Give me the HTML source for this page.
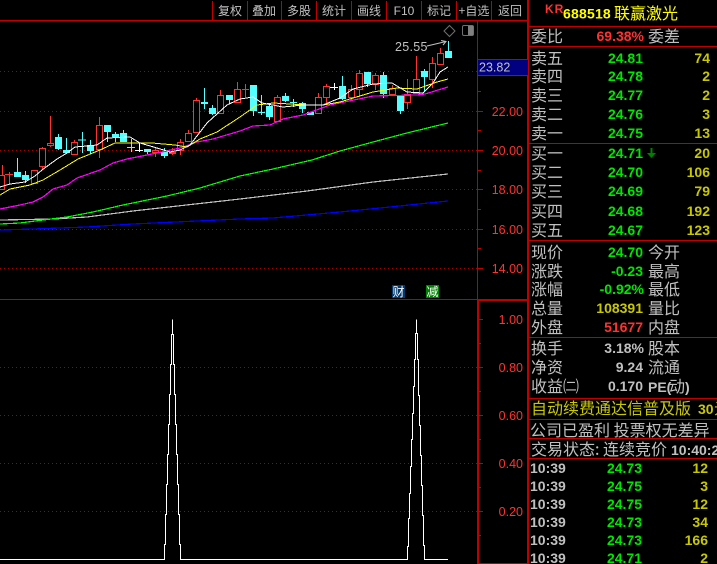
<!DOCTYPE html>
<html><head><meta charset="utf-8"><style>
html,body{margin:0;padding:0;background:#000;width:717px;height:564px;overflow:hidden}
svg{display:block}
text{white-space:pre}
.c{font:16px "WenQuanYi Zen Hei","Noto Sans CJK SC",sans-serif;fill:#c0c0c0}
.b{font:bold 14px "Liberation Sans",sans-serif;text-anchor:end}
.g{fill:#00e600}.y{fill:#c8c800}.r{fill:#ff3232}.w{fill:#c0c0c0}
.tb{font:12px "WenQuanYi Zen Hei","Noto Sans CJK SC",sans-serif;fill:#c0c0c0;text-anchor:middle}
.ax{font:12.5px "Liberation Sans",sans-serif;fill:#ff3232;text-anchor:end}
.ma{fill:none;stroke-width:1.2;shape-rendering:crispEdges}
.mt{fill:none;stroke-width:1;shape-rendering:crispEdges}
.s{shape-rendering:crispEdges}
</style></head><body>
<svg width="717" height="564" viewBox="0 0 717 564" xmlns="http://www.w3.org/2000/svg">
<rect width="717" height="564" fill="#000"/>
<!-- grid -->
<g stroke="#a80000" stroke-dasharray="1 3" class="s" fill="none">
<path d="M0 71.5H477M0 111.5H477M0 150.5H477M0 189.5H477M0 229.5H477M0 268.5H477M0 367.5H477M0 415.5H477M0 463.5H477M0 511.5H477"/>
</g>
<!-- candles: wicks -->
<g class="s" fill="none" stroke-width="1">
<path stroke="#ff3232" d="M2.5 165V190M9.5 172V185M5 174.5H13M34.5 170V183M42.5 147V170M50.5 116V147M74.5 140V155M99.5 117V158M155.5 148V157M172.5 148V155M180.5 139V155M188.5 130V142M196.5 98V133M220.5 90V114M237.5 82V103M245.5 84V97M242 89.5H249M277.5 95V122M318.5 93V114M326.5 84V103M351.5 85V100M359.5 70V97M375.5 73V90M392.5 85V96M407.5 79V109M416.5 56V93M432.5 57V88M440.5 48V64"/>
<path stroke="#54ffff" d="M17.5 158V177M25.5 171V183M58.5 134V150M66.5 138V154M82.5 132V153M78 140H86M90.5 140V154M107.5 125V142M115.5 132V142M123.5 130V142M131.5 139V152M127 147.5H135M147.5 149V154M164.5 148V158M204.5 88V109M212.5 105V115M229.5 95V104M253.5 85V116M261.5 95V115M269.5 104V120M285.5 93V102M293.5 99V107M302.5 102V113M310.5 112V115M342.5 76V100M367.5 72V87M383.5 72V98M400.5 96V114M424.5 69V92M448.5 41V58"/>
<path stroke="#ffffff" d="M139.5 143V152M135 150.5H143M334.5 83V90M330 87.5H338"/>
</g>
<g class="s" fill="#000" stroke="#ff3232">
<rect x="-1.5" y="175.5" width="6" height="14"/>
<rect x="31.5" y="170.5" width="6" height="13"/>
<rect x="39.5" y="148.5" width="6" height="18"/>
<rect x="47.5" y="143.5" width="6" height="2"/>
<rect x="71.5" y="142.5" width="6" height="12"/>
<rect x="96.5" y="125.5" width="6" height="24"/>
<rect x="152.5" y="150.5" width="6" height="2"/>
<rect x="169.5" y="152.5" width="6" height="1"/>
<rect x="177.5" y="142.5" width="6" height="8"/>
<rect x="185.5" y="133.5" width="6" height="8"/>
<rect x="193.5" y="100.5" width="6" height="32"/>
<rect x="217.5" y="95.5" width="6" height="18"/>
<rect x="234.5" y="89.5" width="6" height="13"/>
<rect x="274.5" y="97.5" width="6" height="24"/>
<rect x="315.5" y="97.5" width="6" height="16"/>
<rect x="323.5" y="86.5" width="6" height="11"/>
<rect x="348.5" y="89.5" width="6" height="8"/>
<rect x="356.5" y="73.5" width="6" height="16"/>
<rect x="372.5" y="75.5" width="6" height="9"/>
<rect x="389.5" y="88.5" width="6" height="6"/>
<rect x="404.5" y="94.5" width="6" height="8"/>
<rect x="413.5" y="79.5" width="6" height="14"/>
<rect x="429.5" y="63.5" width="6" height="16"/>
<rect x="437.5" y="53.5" width="6" height="11"/>
</g>
<g class="s" fill="#54ffff">
<rect x="14" y="172" width="7" height="5"/>
<rect x="22" y="175" width="7" height="5"/>
<rect x="55" y="137" width="7" height="12"/>
<rect x="63" y="150" width="7" height="3"/>
<rect x="104" y="125" width="7" height="7"/>
<rect x="112" y="134" width="7" height="3"/>
<rect x="120" y="133" width="7" height="9"/>
<rect x="144" y="149" width="7" height="3"/>
<rect x="161" y="152" width="7" height="4"/>
<rect x="201" y="102" width="7" height="2"/>
<rect x="209" y="108" width="7" height="6"/>
<rect x="226" y="95" width="7" height="5"/>
<rect x="250" y="85" width="7" height="26"/>
<rect x="258" y="112" width="7" height="1"/>
<rect x="266" y="106" width="7" height="11"/>
<rect x="282" y="96" width="7" height="5"/>
<rect x="290" y="102" width="7" height="1"/>
<rect x="299" y="103" width="7" height="6"/>
<rect x="307" y="112" width="7" height="3"/>
<rect x="339" y="86" width="7" height="13"/>
<rect x="364" y="72" width="7" height="12"/>
<rect x="380" y="75" width="7" height="19"/>
<rect x="397" y="96" width="7" height="15"/>
<rect x="421" y="71" width="7" height="6"/>
<rect x="445" y="51" width="7" height="7"/>
<rect x="87" y="145" width="7" height="6"/>
</g>
<!-- moving averages -->
<polyline class="ma" stroke="#0000ff" points="0,230 33,229 87,227 133,224 240,219 273,218 340,212 390,207 448,201"/>
<polyline class="ma" stroke="#c0c0c0" points="0,220 53,219 87,217 133,211 240,199 307,191 373,182 448,174"/>
<polyline class="ma" stroke="#00ff00" points="0,224 20,223 43,220 67,217 93,212 123,205 167,196 200,188 240,176 273,169 312,160 340,151 373,142 407,133 448,123"/>
<polyline class="ma" stroke="#ff00ff" points="0,209 20,205 33,202 43,197 53,189 67,185 77,178 100,170 113,163 127,159 157,153 180,148 197,142 213,139 240,131 253,126 270,125 283,119 303,115 330,105 373,96 417,95 425,94 448,87"/>
<polyline class="mt" stroke="#ffff00" points="0,195 10,189 30,185 43,180 60,170 78,159 100,150 115,143 152,143 175,145 187,147 200,139 217,132 240,117 257,105 273,103 307,105 323,105 340,102 373,92 397,88 417,89 437,82 448,79"/>
<polyline class="mt" stroke="#ffffff" points="0,187 10,184 25,182 35,176 42,170 57,159 67,153 75,147 87,146 97,145 107,138 130,137 140,143 157,148 170,152 180,150 190,145 207,123 227,105 240,99 253,97 262,103 283,107 303,105 323,105 340,98 353,89 373,84 392,83 407,92 423,93 433,83 440,72 448,67"/>
<!-- price marker and icons -->
<text x="395" y="51" style="font:12.5px 'Liberation Sans',sans-serif;letter-spacing:.3px" fill="#c0c0c0">25.55</text>
<path d="M427 46L446 41.5M441 40.5L446 41.5L443 45" fill="none" stroke="#c0c0c0" stroke-width="1"/>
<path d="M449.5 25.5L455 31L449.5 36.5L444 31Z" fill="none" stroke="#707070"/>
<rect x="462.5" y="25.5" width="11" height="10" rx="1.5" fill="#000" stroke="#707070"/>
<rect x="468" y="26" width="5" height="9" fill="#808080"/>
<!-- labels 财 减 -->
<rect x="392" y="285" width="13" height="13" fill="#003a6e"/>
<rect x="426" y="285" width="13" height="13" fill="#008000"/>
<text x="392.5" y="296" style="font:12px 'WenQuanYi Zen Hei','Noto Sans CJK SC',sans-serif" fill="#fff">财</text>
<text x="426.5" y="296" style="font:12px 'WenQuanYi Zen Hei','Noto Sans CJK SC',sans-serif" fill="#fff">减</text>
<!-- lower pane -->
<path class="s" fill="none" stroke="#fff" stroke-width="1" d="M0 559.5H164.5V544.5H165.5V514.5H166.5V484.5H167.5V454.5H168.5V424.5H169.5V394.5H170.5V364.5H171.5V334.5H172.5V319.5V334.5H173.5V364.5H174.5V394.5H175.5V424.5H176.5V454.5H177.5V484.5H178.5V514.5H179.5V544.5H180.5V559.5H407.5V546.5H408.5V518.5H409.5V493.5H410.5V466.5H411.5V439.5H412.5V413.5H413.5V386.5H414.5V359.5H415.5V333.5H416.5V319.5V333.5H417.5V359.5H418.5V395.5H419.5V425.5H420.5V455.5H421.5V485.5H422.5V515.5H423.5V545.5H424.5V559.5H448"/>
<!-- frame lines -->
<g class="s" fill="#c00000">
<rect x="0" y="20" width="528" height="1.5"/>
<rect x="0" y="299" width="477" height="1"/>
<rect x="477" y="21" width="1" height="278"/>
<rect x="477" y="299" width="52" height="2"/>
<rect x="477" y="301" width="2" height="263"/>
<rect x="527" y="0" width="2" height="564"/>
<rect x="477" y="563" width="52" height="1"/>
<rect x="478" y="59" width="50" height="1"/>
<rect x="478" y="75" width="50" height="1"/>
<rect x="529" y="26" width="188" height="1"/>
<rect x="529" y="46" width="188" height="1"/>
<rect x="529" y="143" width="188" height="1"/>
<rect x="529" y="240" width="188" height="1"/>
<rect x="529" y="337" width="188" height="1"/>
<rect x="529" y="398" width="188" height="1"/>
<rect x="529" y="419" width="188" height="1"/>
<rect x="529" y="438" width="188" height="1"/>
<rect x="529" y="458" width="188" height="1"/>
<rect x="212" y="1" width="1" height="19"/>
<rect x="247" y="1" width="1" height="19"/>
<rect x="281" y="1" width="1" height="19"/>
<rect x="316" y="1" width="1" height="19"/>
<rect x="351" y="1" width="1" height="19"/>
<rect x="386" y="1" width="1" height="19"/>
<rect x="421" y="1" width="1" height="19"/>
<rect x="456" y="1" width="1" height="19"/>
<rect x="491" y="1" width="1" height="19"/>
</g>
<!-- axis ticks -->
<path class="s" stroke="#c00000" fill="none" d="M478 91.5H481M478 111.5H483M478 130.5H481M478 150.5H483M478 170.5H481M478 189.5H483M478 209.5H481M478 229.5H483M478 248.5H481M478 268.5H483M479 319.5H483M479 343.5H481M479 367.5H483M479 391.5H481M479 415.5H483M479 439.5H481M479 463.5H483M479 487.5H481M479 511.5H483M479 535.5H481"/>
<!-- toolbar -->
<text class="tb" x="230" y="15">复权</text>
<text class="tb" x="264" y="15">叠加</text>
<text class="tb" x="299" y="15">多股</text>
<text class="tb" x="334" y="15">统计</text>
<text class="tb" x="369" y="15">画线</text>
<text class="tb" x="404" y="15" style="font-family:'Liberation Sans',sans-serif">F10</text>
<text class="tb" x="439" y="15">标记</text>
<text class="tb" x="474" y="15">+自选</text>
<text class="tb" x="510" y="15">返回</text>
<!-- axis -->
<rect x="478" y="60" width="50" height="15" fill="#000080"/>
<text x="479" y="71.5" style="font:12.5px 'Liberation Sans',sans-serif" fill="#c0c0c0">23.82</text>
<text class="ax" x="523" y="116">22.00</text>
<text class="ax" x="523" y="155">20.00</text>
<text class="ax" x="523" y="194">18.00</text>
<text class="ax" x="523" y="234">16.00</text>
<text class="ax" x="523" y="273">14.00</text>
<text class="ax" x="523" y="324">1.00</text>
<text class="ax" x="523" y="372">0.80</text>
<text class="ax" x="523" y="420">0.60</text>
<text class="ax" x="523" y="468">0.40</text>
<text class="ax" x="523" y="516">0.20</text>
<!-- quote header -->
<text x="545" y="13" style="font:bold 12px 'Liberation Sans',sans-serif;letter-spacing:1px" fill="#ff3232">KR</text>
<text x="563" y="18.5" style="font:bold 14px 'Liberation Sans',sans-serif;letter-spacing:.2px" fill="#ffff00">688518</text>
<text x="614" y="19" class="c" style="fill:#ffff00">联赢激光</text>
<text x="531" y="42" class="c">委比</text>
<text x="644" y="41" class="b r">69.38%</text>
<text x="648" y="42" class="c">委差</text>
<!-- order book -->
<g class="c">
<text x="531" y="64">卖五</text><text x="531" y="82">卖四</text><text x="531" y="101">卖三</text><text x="531" y="120">卖二</text><text x="531" y="139">卖一</text>
<text x="531" y="159">买一</text><text x="531" y="178">买二</text><text x="531" y="197">买三</text><text x="531" y="217">买四</text><text x="531" y="236">买五</text>
<text x="531" y="258">现价</text><text x="531" y="277">涨跌</text><text x="531" y="295">涨幅</text><text x="531" y="314">总量</text><text x="531" y="333">外盘</text>
<text x="531" y="354">换手</text><text x="531" y="373">净资</text><text x="531" y="392">收益㈡</text>
<text x="648" y="258">今开</text><text x="648" y="277">最高</text><text x="648" y="295">最低</text><text x="648" y="314">量比</text><text x="648" y="333">内盘</text>
<text x="648" y="354">股本</text><text x="648" y="373">流通</text>
</g>
<g class="b g">
<text x="643" y="63">24.81</text><text x="643" y="81">24.78</text><text x="643" y="100">24.77</text><text x="643" y="119">24.76</text><text x="643" y="138">24.75</text>
<text x="643" y="158">24.71</text><text x="643" y="177">24.70</text><text x="643" y="196">24.69</text><text x="643" y="216">24.68</text><text x="643" y="235">24.67</text>
<text x="643" y="257">24.70</text><text x="643" y="276">-0.23</text><text x="644" y="294">-0.92%</text>
</g>
<g class="b y">
<text x="710" y="63">74</text><text x="710" y="81">2</text><text x="710" y="100">2</text><text x="710" y="119">3</text><text x="710" y="138">13</text>
<text x="710" y="158">20</text><text x="710" y="177">106</text><text x="710" y="196">79</text><text x="710" y="216">192</text><text x="710" y="235">123</text>
<text x="643" y="313">108391</text>
</g>
<text x="643" y="332" class="b r">51677</text>
<g class="b w">
<text x="644" y="353">3.18%</text><text x="643" y="372">9.24</text><text x="643" y="391">0.170</text>
</g>
<text x="648" y="392" style="font:bold 14px 'Liberation Sans',sans-serif" fill="#c0c0c0">PE(</text>
<text x="669" y="392" class="c">动</text>
<text x="685" y="392" style="font:bold 14px 'Liberation Sans',sans-serif" fill="#c0c0c0">)</text>
<path d="M651.5 148V154" stroke="#008000" stroke-width="2" fill="none"/>
<path d="M647 153L651.5 158L656 153Z" fill="#008000"/>
<!-- ticker text -->
<text x="531" y="414" class="c" style="fill:#c8c800">自动续费通达信普及版</text>
<text x="698" y="414" style="font:bold 14px 'Liberation Sans',sans-serif" fill="#c8c800">30</text>
<text x="714" y="414" class="c" style="fill:#c8c800">元</text>
<text x="530" y="436" class="c">公司已盈利 投票权无差异</text>
<text x="531" y="455" class="c">交易状态: 连续竞价</text>
<text x="671" y="455" style="font:bold 14px 'Liberation Sans',sans-serif" fill="#c0c0c0">10:40:2</text>
<!-- ticks -->
<g style="font:bold 14px 'Liberation Sans',sans-serif" fill="#c0c0c0">
<text x="530" y="473">10:39</text><text x="530" y="491">10:39</text><text x="530" y="509">10:39</text><text x="530" y="527">10:39</text><text x="530" y="545">10:39</text><text x="530" y="563">10:39</text>
</g>
<g class="b g">
<text x="642" y="473">24.73</text><text x="642" y="491">24.75</text><text x="642" y="509">24.75</text><text x="642" y="527">24.73</text><text x="642" y="545">24.73</text><text x="642" y="563">24.71</text>
</g>
<g class="b y">
<text x="708" y="473">12</text><text x="708" y="491">3</text><text x="708" y="509">12</text><text x="708" y="527">34</text><text x="708" y="545">166</text><text x="708" y="563">2</text>
</g>
</svg>
</body></html>
